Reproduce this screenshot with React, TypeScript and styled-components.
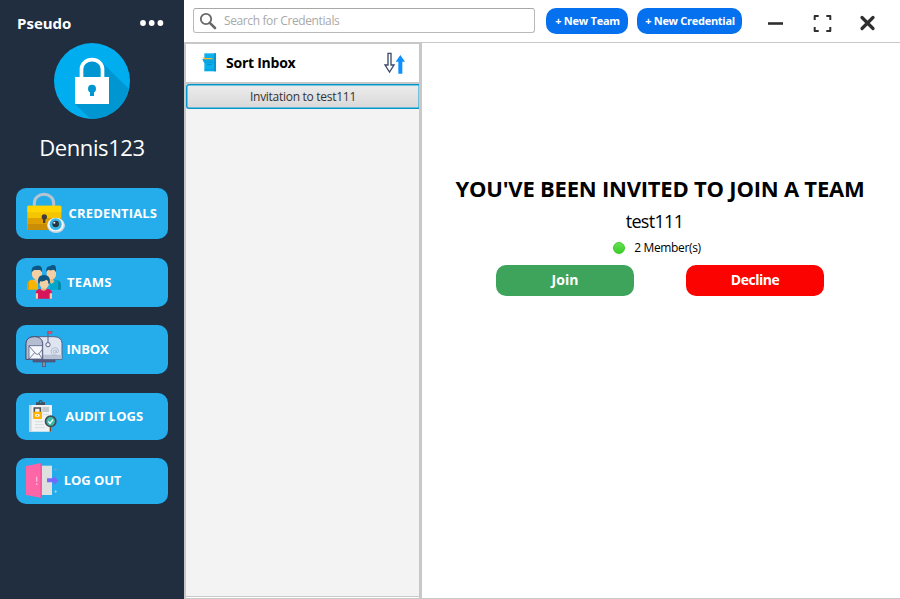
import React from "react";
import styled, { createGlobalStyle } from "styled-components";

const GlobalStyle = createGlobalStyle`
  * { box-sizing: border-box; }
  body { margin: 0; background: #fff; }
  button { border: 0; padding: 0; margin: 0; font: inherit; cursor: pointer; }
  svg { display: block; flex: none; }
`;

const Window = styled.div`
  width: 900px;
  height: 599px;
  display: flex;
  overflow: hidden;
  background: #fff;
  color: #000;
  font-family: "Open Sans", "Noto Sans", sans-serif;
`;

const Label = styled.span<{ $size: number; $bold?: boolean; $track?: number; $line?: number }>`
  font-size: ${(p) => p.$size}px;
  font-weight: ${(p) => (p.$bold ? 700 : 400)};
  letter-spacing: ${(p) => p.$track ?? 0}px;
  line-height: ${(p) => p.$line ?? 20}px;
  white-space: nowrap;
`;

const Sidebar = styled.aside`
  width: 184px;
  flex: none;
  background: #202e3f;
  color: #fff;
  display: flex;
  flex-direction: column;
  align-items: center;
`;

const Brand = styled.div`
  width: 100%;
  height: 43px;
  padding: 13px 20px 0 17px;
  display: flex;
  justify-content: space-between;
`;

const UserName = styled.div`
  height: 30px;
  margin-top: 13px;
`;

const Nav = styled.nav`
  margin-top: 26px;
  display: flex;
  flex-direction: column;
`;

const NavButton = styled.button<{ $height: number; $gap: number }>`
  width: 152px;
  height: ${(p) => p.$height}px;
  margin-bottom: ${(p) => p.$gap}px;
  border-radius: 10px;
  background: #25aceb;
  color: #fff;
  display: flex;
  align-items: center;
  overflow: hidden;
`;

const NavText = styled(Label)<{ $left: number }>`
  margin: -2px 0 0 ${(p) => p.$left}px;
`;

const Main = styled.main`
  flex: 1;
  min-width: 0;
  display: flex;
  flex-direction: column;
`;

const TopBar = styled.header`
  height: 43px;
  border-bottom: 1px solid #c8c8c8;
  padding: 8px 0 0 9px;
  display: flex;
  align-items: flex-start;
`;

const Search = styled.div`
  width: 342px;
  height: 25px;
  border: 1px solid #bababa;
  border-top-color: #a8a8a8;
  border-radius: 3px;
  color: #a9a9a9;
  display: flex;
  align-items: center;
  padding-left: 5px;
  gap: 7px;
`;

const PillButton = styled.button<{ $width: number; $left: number }>`
  width: ${(p) => p.$width}px;
  height: 26px;
  margin-left: ${(p) => p.$left}px;
  border-radius: 10px;
  background: #0571ee;
  color: #fff;
  display: flex;
  justify-content: center;
  align-items: center;
  padding-left: 1px;
`;

const WindowControls = styled.div`
  margin-left: 24px;
  display: flex;
`;

const Body = styled.div`
  flex: 1;
  min-height: 0;
  display: flex;
  border-bottom: 1px solid #c8c8c8;
`;

const InboxPanel = styled.section`
  width: 238px;
  flex: none;
  border: solid #c8c8c8;
  border-width: 1px 3px 0 2px;
  display: flex;
  flex-direction: column;
`;

const SortBar = styled.div`
  height: 40px;
  border-bottom: 2px solid #c8c8c8;
  padding: 0 14px 0 15px;
  display: flex;
  align-items: center;
`;

const SortTitle = styled(Label)`
  margin: 0 auto 0 9px;
`;

const InboxList = styled.div`
  flex: 1;
  background: #f3f3f3;
  border-bottom: 1px solid #c8c8c8;
  margin-bottom: 1px;
`;

const InboxItem = styled.button`
  width: 100%;
  height: 25px;
  border: 1px solid #0096c9;
  border-right: 0;
  border-radius: 3px 0 0 3px;
  box-shadow: inset 0 0 0 0.5px #039ed3;
  background: linear-gradient(#ececec, #d9d9d9);
  color: #333;
  display: flex;
  justify-content: center;
  align-items: center;
`;

const Detail = styled.section`
  flex: 1;
  padding: 130px 2px 0 0;
  display: flex;
  flex-direction: column;
  align-items: center;
`;

const TeamName = styled(Label)`
  margin: 3px 11px 0 0;
`;

const Members = styled.div`
  height: 20px;
  margin: 2px 0 0 -6px;
  display: flex;
  align-items: center;
  gap: 9px;
`;

const Online = styled.i`
  width: 12px;
  height: 12px;
  border-radius: 50%;
  border: 1px solid #3cc92b;
  background: linear-gradient(#66e052, #39cf27);
`;

const Actions = styled.div`
  margin-top: 7px;
  display: flex;
  gap: 52px;
`;

const ActionButton = styled.button<{ $color: string }>`
  width: 138px;
  height: 31px;
  padding-bottom: 1px;
  display: flex;
  align-items: center;
  justify-content: center;
  border-radius: 10px;
  background: ${(p) => p.$color};
  color: #fff;
`;

const Dots = () => (
  <svg width="24" height="8" viewBox="0 0 24 8" fill="#fff">
    <circle cx="3" cy="4" r="2.900" />
    <circle cx="11.700" cy="4" r="2.900" />
    <circle cx="20.400" cy="4" r="2.900" />
  </svg>
);

const DotsSlot = styled.div`
  margin-top: 6px;
`;

const Logo = () => (
  <svg width="76" height="76" viewBox="162 129 228 228">
    <defs>
      <clipPath id="disc">
        <circle cx="276" cy="243" r="114" />
      </clipPath>
    </defs>
    <circle cx="276" cy="243" r="114" fill="#00adee" />
    <path clipPath="url(#disc)" d="M302 184 L410 290 V380 H295 L225 312 Z" fill="#0096d1" />
    <path d="M249 232V205a27 25 0 0 1 54 0v27z" fill="#0096d1" />
    <path d="M244.500 232V207a31.500 28 0 0 1 63 0v25" fill="none" stroke="#fff" strokeWidth="11" />
    <rect x="225" y="231" width="102" height="81" fill="#fff" />
    <circle cx="276" cy="266" r="12" fill="#0096d1" />
    <rect x="270" y="270" width="12" height="18" fill="#0096d1" />
  </svg>
);

const CredentialsIcon = () => (
  <svg width="50" height="51" viewBox="18 24 150 153">
    <path d="M73 80V69a29 26 0 0 1 58 0v11" fill="none" stroke="#b6c4cf" strokeWidth="9" />
    <rect x="52" y="77" width="102" height="73" rx="4" fill="#f5c500" />
    <path d="M52 97V81q0-4 4-4h94q4 0 4 4v16z" fill="#ffd500" />
    <rect x="52" y="114" width="102" height="18" fill="#e0a100" />
    <path d="M52 132h102v14q0 4-4 4H56q-4 0-4-4z" fill="#c98d08" />
    <circle cx="103" cy="111" r="8" fill="#3f3d3c" />
    <rect x="99" y="112" width="7" height="17" fill="#3f3d3c" />
    <ellipse cx="138" cy="136" rx="27" ry="23" fill="#c8d7df" />
    <ellipse cx="137" cy="134" rx="24" ry="20" fill="#f3f8fa" />
    <circle cx="137" cy="133" r="18" fill="#36b5e7" />
    <circle cx="137" cy="132" r="10" fill="#283541" />
    <circle cx="133" cy="128" r="3" fill="#fff" />
  </svg>
);

const TeamsIcon = () => (
  <svg width="50" height="49" viewBox="18 24 150 147">
    <path d="M52 119v-14q0-14 14-16h18v30z" fill="#f7b500" />
    <path d="M52 119v-14q0-8 5-12v26z" fill="#df9700" />
    <path d="M120 89h20q13 2 13 16v14h-33z" fill="#00a7ca" />
    <path d="M144 92q9 4 9 15v12h-9z" fill="#0089ac" />
    <path d="M75 83h13v13l-8 5-9-10 4-2zM115 83h15v8l4 3-9 8-10-10z" fill="#e9ba83" />
    <path d="M66 65q0-12 15-12t15 12v10q-2 13-15 14-13-1-15-14z" fill="#f3cfa3" />
    <path d="M65 68q-2-20 12-20 15-5 19 7v12q-4-7-7-7H74q-6 1-9 8z" fill="#0d5784" />
    <path d="M110 63q0-10 14-10t14 10v12q-2 13-14 13t-14-13z" fill="#f3cfa3" />
    <path d="M109 66q-3-18 13-18 3-5 12-2 5 2 4 21-3-8-8-8-10 3-15 0-3 2-6 7z" fill="#0d5784" />
    <path d="M77 146v-16q0-11 12-13h26q11 2 11 13v16z" fill="#d6155a" />
    <path d="M77 130h7v16h-7zM119 130h7v16h-7z" fill="#f3cfa3" />
    <path d="M93 110h16v9q-8 6-16 0z" fill="#e4b47b" />
    <path d="M88 88h29v13q-4 15-14 15-11 0-15-15z" fill="#f3cfa3" />
    <path d="M84 97q-2-22 18-22 20 0 18 23l-5 4q1-10-5-13-10 7-20 5l-2 9z" fill="#0d5784" />
  </svg>
);

const InboxIcon = () => (
  <svg width="50" height="49" viewBox="18 21 150 147">
    <rect x="97" y="129" width="9" height="17" fill="#8790aa" stroke="#484d72" strokeWidth="2" />
    <path d="M69 125h66v7H69z" fill="#555b7e" stroke="#484d72" strokeWidth="2" />
    <path d="M48 124V76q2-20 26-20h57q24 0 25 20v48z" fill="#dfe5f0" stroke="#596385" strokeWidth="3" />
    <path d="M98 110h57v13H98z" fill="#b9c2d5" />
    <path d="M48 124V76q2-20 25-20t25 20v48z" fill="#b5bed0" stroke="#484d72" strokeWidth="3" />
    <path d="M57 83h40v40H57z" fill="#f5f7fb" stroke="#596385" strokeWidth="2.500" />
    <path d="M57 84l20 23q6 5 11-1l9-12M57 123l17-19M97 123l-10-16" fill="none" stroke="#596385" strokeWidth="2.500" />
    <path d="M114 72V40" stroke="#596385" strokeWidth="3" />
    <rect x="114" y="40" width="12" height="7" fill="#ee4d62" stroke="#a3334e" strokeWidth="1" />
    <circle cx="114" cy="80" r="6.500" fill="#eef1f7" stroke="#596385" strokeWidth="3" />
    <g fill="none" stroke="#a6b2c9" strokeWidth="2.500">
      <circle cx="134" cy="101" r="4.500" />
      <path d="M139 96v7q5 3 7-2 0-12-12-12-11 1-11 12 1 12 18 11" />
    </g>
  </svg>
);

const AuditIcon = () => (
  <svg width="50" height="47" viewBox="18 24 150 141">
    <path d="M58 60h68v80H58z" fill="#f0f2f3" />
    <path d="M58 60h7v80h-7z" fill="#d0d2d5" />
    <path d="M78 60v-8h8q0-7 6-7t6 7h7v8z" fill="#464f5a" />
    <circle cx="92" cy="51" r="2.500" fill="#25aceb" />
    <rect x="97" y="66" width="20" height="15" fill="#c6cacf" />
    <path d="M99 89h18M75 110h24M75 119h26M75 128h30" stroke="#d8dcdf" strokeWidth="3" />
    <path d="M73 82V69h18v13" fill="none" stroke="#4b5056" strokeWidth="5" />
    <rect x="69" y="80" width="27" height="22" rx="2" fill="#ffb300" />
    <ellipse cx="82" cy="91" rx="7" ry="4.500" fill="#fff" />
    <circle cx="82" cy="91" r="2.500" fill="#e69a00" />
    <path d="M122 126v14" stroke="#7a4b22" strokeWidth="6" />
    <circle cx="122" cy="109" r="15.500" fill="#3dbbaa" stroke="#3f4c56" strokeWidth="5" />
    <path d="M115 109l5 6 9-11" fill="none" stroke="#fff" strokeWidth="4" />
  </svg>
);

const LogoutIcon = () => (
  <svg width="50" height="46" viewBox="18 24 150 138">
    <rect x="92" y="47" width="34" height="88" fill="#dedfdf" />
    <path d="M48 48l47-9v105l-47-9z" fill="#ff66a8" />
    <path d="M92 40l3-1v105l-3-1z" fill="#dc4c8c" />
    <path d="M80 80v15M80 100v5" stroke="#ffc2db" strokeWidth="3.500" />
    <path d="M111 85h20v-7l15 14-15 13v-8h-20z" fill="#746aff" />
    <path d="M137 55v8M133 59h8" stroke="#9c99be" strokeWidth="2" />
    <path d="M137 120v9M133 125h8" stroke="#b9d9f2" strokeWidth="2" />
  </svg>
);

const SearchIcon = () => (
  <svg width="18" height="18" viewBox="0 0 18 18" fill="none" stroke="#686868">
    <circle cx="7" cy="7" r="5.200" strokeWidth="1.800" />
    <path d="M10.800 10.800L16 16" strokeWidth="2.600" strokeLinecap="round" />
  </svg>
);

const CabinetIcon = () => (
  <svg width="16" height="20" viewBox="0 0 48 60">
    <path d="M10 1h35v54H10z" fill="#0bb0ed" />
    <path d="M39 1h6v54h-6z" fill="#0795d0" />
    <path d="M10 29h35M10 50h35" stroke="#0795d0" strokeWidth="2" />
    <path d="M4 18h31v10H8z" fill="#0ba5df" />
    <path d="M4 13l5 6h25v-4H14z" fill="#ffb52d" />
    <path d="M18 35h14" stroke="#087fb5" strokeWidth="2" />
  </svg>
);

const SortIcon = () => (
  <svg width="22" height="22" viewBox="0 0 66 66">
    <path d="M15 4h9v35h9L19.500 60 6 39h9z" fill="#fff" stroke="#3c4869" strokeWidth="4" />
    <path d="M52 9L66 29h-8v36H46V29h-8z" fill="#1090ff" />
  </svg>
);

const ControlsIcon = () => (
  <svg width="116" height="26" viewBox="0 0 116 26" fill="none" stroke="#2f2f2f">
    <path d="M2 15.500h15" strokeWidth="2.600" />
    <path d="M48.700 12V8h4M60.300 8h4v4M64.300 19v4h-4M52.700 23h-4v-4" strokeWidth="2" strokeLinejoin="round" />
    <path d="M96 9.500l11 11M107 9.500L96 20.500" strokeWidth="3.200" strokeLinecap="round" />
  </svg>
);

const navItems = [
  { text: "CREDENTIALS", height: 51, gap: 19, left: 2.6, track: 0.15, icon: <CredentialsIcon /> },
  { text: "TEAMS", height: 49, gap: 18, left: 1, track: 0.3, icon: <TeamsIcon /> },
  { text: "INBOX", height: 49, gap: 19, left: 0.5, track: -0.1, icon: <InboxIcon /> },
  { text: "AUDIT LOGS", height: 47, gap: 18, left: -0.8, track: 0, icon: <AuditIcon /> },
  { text: "LOG OUT", height: 46, gap: 0, left: -2.2, track: -0.1, icon: <LogoutIcon /> },
];

export default function App() {
  return (
    <>
      <GlobalStyle />
      <Window>
        <Sidebar>
          <Brand>
            <Label $size={15} $bold>Pseudo</Label>
            <DotsSlot><Dots /></DotsSlot>
          </Brand>
          <Logo />
          <UserName><Label $size={22} $line={30} $track={-0.4}>Dennis123</Label></UserName>
          <Nav>
            {navItems.map((item) => (
              <NavButton key={item.text} $height={item.height} $gap={item.gap}>
                {item.icon}
                <NavText $size={13} $bold $left={item.left} $track={item.track}>{item.text}</NavText>
              </NavButton>
            ))}
          </Nav>
        </Sidebar>
        <Main>
          <TopBar>
            <Search>
              <SearchIcon />
              <Label $size={12} $track={-0.38}>Search for Credentials</Label>
            </Search>
            <PillButton $width={82} $left={11}><Label $size={11} $bold $track={-0.25}>+ New Team</Label></PillButton>
            <PillButton $width={105} $left={9}><Label $size={11} $bold $track={-0.28}>+ New Credential</Label></PillButton>
            <WindowControls><ControlsIcon /></WindowControls>
          </TopBar>
          <Body>
            <InboxPanel>
              <SortBar>
                <CabinetIcon />
                <SortTitle $size={14} $bold $track={-0.25}>Sort Inbox</SortTitle>
                <SortIcon />
              </SortBar>
              <InboxList>
                <InboxItem><Label $size={12} $track={-0.28}>Invitation to test111</Label></InboxItem>
              </InboxList>
            </InboxPanel>
            <Detail>
              <Label $size={22} $bold $line={30} $track={-0.22}>YOU'VE BEEN INVITED TO JOIN A TEAM</Label>
              <TeamName $size={18} $line={30} $track={-0.7}>test111</TeamName>
              <Members>
                <Online />
                <Label $size={12} $track={-0.36}>2 Member(s)</Label>
              </Members>
              <Actions>
                <ActionButton $color="#3ea45c"><Label $size={14} $bold>Join</Label></ActionButton>
                <ActionButton $color="#fb0300"><Label $size={14} $bold $track={-0.5}>Decline</Label></ActionButton>
              </Actions>
            </Detail>
          </Body>
        </Main>
      </Window>
    </>
  );
}
